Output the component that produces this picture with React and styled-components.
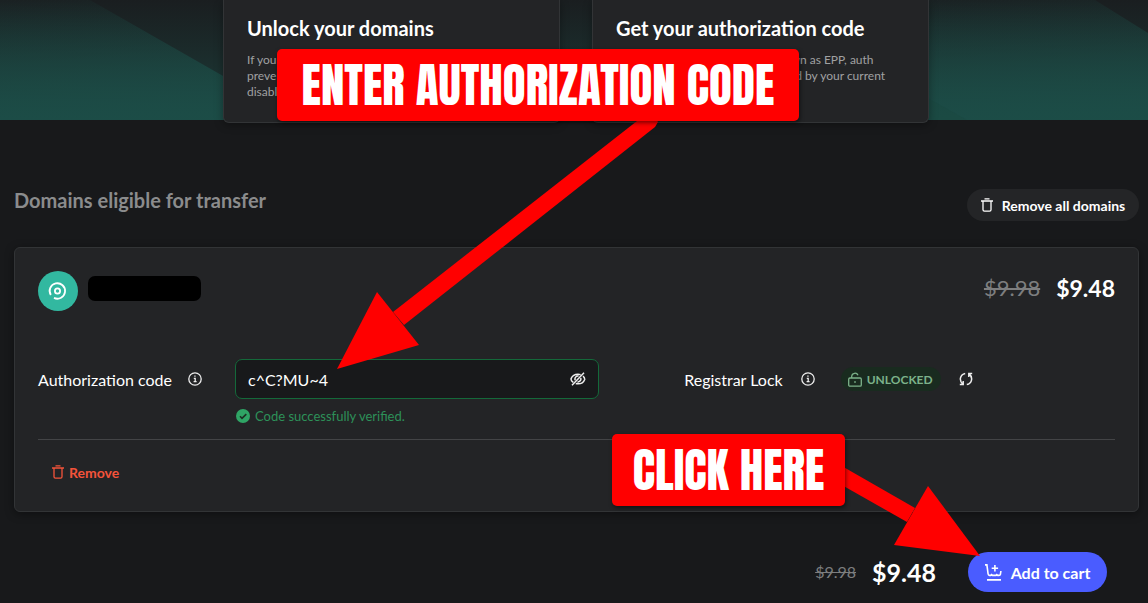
import React from 'react';
import styled, { createGlobalStyle } from 'styled-components';

const GlobalStyle = createGlobalStyle`
  *, *::before, *::after { box-sizing: border-box; }
  body {
    margin: 0;
    background: #18191b;
    color: #fff;
    font-family: Lato, "Liberation Sans", sans-serif;
  }
  button, input { font: inherit; color: inherit; }
  h2, h3, p { margin: 0; }
`;

const Page = styled.div`
  position: relative;
  overflow-x: hidden;
`;

const Hero = styled.header`
  position: relative;
  height: 120px;
  padding: 0 10px 0 14px;
  background: linear-gradient(#1a1e20, #1c3c39);
`;

const HeroArt = styled.svg`
  position: absolute;
  inset: 0;
  width: 100%;
  height: 100%;
`;

const Tips = styled.div`
  position: relative;
  display: grid;
  grid-template-columns: 1fr 1fr;
  gap: 32px;
  max-width: 706px;
  margin: 0 auto;
`;

const Tip = styled.article`
  padding: 16px 23px 22px;
  background: #232426;
  border: 1px solid #323436;
  border-top: 0;
  border-radius: 0 0 6px 6px;
  box-shadow: 0 2px 8px rgba(0, 0, 0, 0.35);
`;

const TipTitle = styled.h3`
  margin-bottom: 12px;
  font-size: 20px;
  line-height: 24px;
  font-weight: 700;
  white-space: nowrap;
`;

const TipText = styled.p`
  font-size: 12px;
  line-height: 16px;
  color: #a0a1a2;
  white-space: nowrap;
`;

const Main = styled.main`
  padding: 69px 9px 0 14px;
`;

const SectionHead = styled.div`
  display: flex;
  align-items: flex-start;
  justify-content: space-between;
  margin-bottom: 26px;
`;

const SectionTitle = styled.h2`
  font-size: 20px;
  line-height: 22px;
  font-weight: 700;
  color: #8b8c8d;
`;

const PillButton = styled.button`
  display: flex;
  align-items: center;
  justify-content: center;
  gap: 9px;
  width: ${p => (p.$primary ? 139 : 172)}px;
  height: ${p => (p.$primary ? 40 : 32)}px;
  padding: 0;
  border: 0;
  border-radius: 20px;
  background: ${p => (p.$primary ? '#4a5cff' : '#242527')};
  font-size: ${p => (p.$primary ? 16 : 14)}px;
  font-weight: 700;
  white-space: nowrap;
  cursor: pointer;
`;

const DomainCard = styled.section`
  padding: 23px;
  background: #232426;
  border: 1px solid #323436;
  border-radius: 6px;
  box-shadow: 0 2px 10px rgba(0, 0, 0, 0.4);
`;

const DomainHead = styled.div`
  display: flex;
  align-items: flex-start;
  gap: 10px;
  height: 40px;
`;

const Redacted = styled.div`
  width: 113px;
  height: 25px;
  margin-top: 5px;
  border-radius: 7px;
  background: #000;
`;

const Prices = styled.div`
  display: flex;
  align-items: center;
  gap: 16px;
  margin-left: auto;
  line-height: 34px;
`;

const OldPrice = styled.s`
  font-size: ${p => (p.$small ? 16 : 22)}px;
  color: #7d7e7f;
`;

const Price = styled.strong`
  font-size: ${p => (p.$large ? 25 : 23)}px;
  font-weight: 700;
`;

const Fields = styled.div`
  display: grid;
  grid-template-columns: 3fr 2fr;
  margin-top: 48px;
  padding-bottom: 15px;
  border-bottom: 1px solid #434446;
`;

const CodeField = styled.div`
  display: grid;
  grid-template-columns: 197px 1fr;
  padding-right: 85px;
`;

const LabelRow = styled.div`
  display: flex;
  align-items: center;
  gap: ${p => (p.$wide ? 18 : 16)}px;
  height: 40px;
  font-size: 16px;
  white-space: nowrap;
`;

const IconButton = styled.button`
  display: inline-flex;
  padding: 0;
  border: 0;
  background: none;
  cursor: pointer;
`;

const InputBox = styled.div`
  display: flex;
  align-items: center;
  height: 40px;
  padding: 0 12px;
  background: #18191b;
  border: 1px solid #14693a;
  border-radius: 7px;
`;

const CodeInput = styled.input`
  flex: 1;
  min-width: 0;
  padding: 0;
  border: 0;
  outline: 0;
  background: none;
  font-size: 16px;
`;

const Verified = styled.p`
  display: flex;
  align-items: center;
  gap: 5px;
  padding: 9px 0 0 1px;
  font-size: 13px;
  line-height: 16px;
  color: #2d9159;
`;

const Badge = styled.span`
  display: flex;
  align-items: center;
  gap: 5px;
  height: 24px;
  margin-left: 8px;
  padding: 0 8px 0 7px;
  border-radius: 12px;
  background: #192b1f;
  color: #7cb28a;
  font-size: 12px;
  font-weight: 700;
`;

const RemoveButton = styled.button`
  display: flex;
  align-items: center;
  gap: 5px;
  height: 32px;
  margin: 16px 0 0;
  padding: 0 14px;
  border: 0;
  background: none;
  color: #f4533a;
  font-size: 14px;
  font-weight: 700;
  cursor: pointer;
`;

const Summary = styled.footer`
  display: flex;
  align-items: center;
  gap: 32px;
  padding: 40px 32px 11px;
`;

const Callouts = styled.div`
  position: absolute;
  inset: 0;
  pointer-events: none;
`;

const Arrows = styled.svg`
  position: absolute;
  top: 0;
  left: 0;
`;

const Callout = styled.div`
  position: absolute;
  left: ${p => p.$x}px;
  top: ${p => p.$y}px;
  display: flex;
  align-items: center;
  justify-content: center;
  width: ${p => p.$w}px;
  height: 72px;
  border-radius: 5px;
  background: #f00;
  box-shadow: 1px 2px 4px rgba(0, 0, 0, 0.5);
  font-family: Anton, Impact, "Liberation Sans Narrow", sans-serif;
  font-size: 47px;
  font-weight: 400;
  white-space: nowrap;
`;

const Trash = () => (
  <svg width="12" height="14" viewBox="0 0 12 14" fill="none" stroke="currentColor" strokeWidth="1.3">
    <path d="M3.5 .8h5M0 3h12M2 3v8.8q0 1.4 1.4 1.4h5.2q1.4 0 1.4-1.4V3" />
  </svg>
);

const Info = () => (
  <svg width="14" height="14" viewBox="0 0 14 14" fill="none" stroke="#eee" strokeWidth="1.3">
    <circle cx="7" cy="7" r="6.2" />
    <path d="M5.8 6.4H7.2V9.6M5.6 9.7h3M6.3 4.2h1.3" />
  </svg>
);

const Avatar = () => (
  <svg width="40" height="40" viewBox="0 0 40 40" fill="none" stroke="#fff" strokeWidth="1.8">
    <circle cx="20" cy="20" r="20" fill="#32b8a0" stroke="none" />
    <circle cx="19.5" cy="20" r="2.6" />
    <path d="M12.8 24A7.7 7.7 0 1 1 16 26.9" />
  </svg>
);

const EyeOff = () => (
  <svg width="16" height="16" viewBox="0 0 16 16" fill="none" stroke="#eee" strokeWidth="1.5">
    <path d="M2 14.2 14 1.8M3.3 11.4C1.4 10 .8 8.4 1.2 7.4 2.3 4.7 5 3.2 8 3.2q1.500 0 2.600.4M13 5.100q1.800 1.500 1.700 3.300C13.600 11.300 11 12.800 8 12.800q-1.200 0-2.200-.3M5.200 9.200A3 3 0 0 1 8.600 5.100M10.700 6.900A3 3 0 0 1 7.400 10.900" />
  </svg>
);

const Check = () => (
  <svg width="14" height="14" viewBox="0 0 14 14">
    <circle cx="7" cy="7" r="7" fill="#2fa565" />
    <path d="m4 7.300 2 2 4.300-4.200" fill="none" stroke="#1d3024" strokeWidth="1.600" />
  </svg>
);

const Unlock = () => (
  <svg width="14" height="15" viewBox="0 0 14 15" fill="none" stroke="currentColor" strokeWidth="1.300">
    <rect x=".7" y="6" width="12.600" height="8.200" rx="1.200" />
    <path d="M3.700 6V4.200A3.300 3.300 0 0 1 10 3.200M6.200 10h1.600" />
  </svg>
);

const Refresh = () => (
  <svg width="14" height="14" viewBox="0 0 14 14" fill="none" stroke="#eee" strokeWidth="1.500">
    <path d="M6.200 1.400C1 2.400-.4 8.600 4 12.400M.8 12.600h3.400V9M7.800 12.600C13 11.600 14.400 5.400 10 1.600M13.200 1.400H9.800V5" />
  </svg>
);

const Cart = () => (
  <svg width="17" height="17" viewBox="0 0 17 17" fill="none" stroke="#fff" strokeWidth="1.600">
    <path d="M0 .9h1.900L3.100 10q.2 1.400 1.300 1.400h1.400l.8-.8.900.8h3.500l.8-.8.900.8h1.300q1.200 0 1.400-1.100l.5-3.300M9.900 1v6.400M6.700 4.200h6.400M2 15.900h14" />
  </svg>
);

export default function App() {
  return (
    <Page>
      <GlobalStyle />
      <Hero>
        <HeroArt viewBox="0 0 1148 120" preserveAspectRatio="none">
          <defs>
            <linearGradient id="glow" x1="0.1" y1="0" x2="0.2" y2="1">
              <stop offset="0" stopColor="#1c5a52" stopOpacity="0.05" />
              <stop offset="1" stopColor="#1c4e48" stopOpacity="0.9" />
            </linearGradient>
          </defs>
          <path d="M0 0H90L300 120H0z" fill="url(#glow)" />
          <path d="M870 0H1095L1148 33V120H870z" fill="url(#glow)" />
          <path d="M870 66 967 120H870z" fill="#19483f" opacity="0.5" />
        </HeroArt>
        <Tips>
          <Tip>
            <TipTitle>Unlock your domains</TipTitle>
            <TipText>
              If your domain is locked, unlock it to<br />
              prevent any delays. You may also<br />
              disable domain privacy.
            </TipText>
          </Tip>
          <Tip>
            <TipTitle>Get your authorization code</TipTitle>
            <TipText>
              Your authorization code, also known as EPP, auth<br />
              or transfer code, is usually provided by your current<br />
              domain registrar.
            </TipText>
          </Tip>
        </Tips>
      </Hero>
      <Main>
        <SectionHead>
          <SectionTitle>Domains eligible for transfer</SectionTitle>
          <PillButton type="button"><Trash />Remove all domains</PillButton>
        </SectionHead>
        <DomainCard>
          <DomainHead>
            <Avatar />
            <Redacted />
            <Prices>
              <OldPrice>$9.98</OldPrice>
              <Price>$9.48</Price>
            </Prices>
          </DomainHead>
          <Fields>
            <CodeField>
              <LabelRow>
                <label htmlFor="code">Authorization code</label>
                <IconButton type="button" aria-label="About authorization codes"><Info /></IconButton>
              </LabelRow>
              <div>
                <InputBox>
                  <CodeInput id="code" defaultValue="c^C?MU~4" />
                  <IconButton type="button" aria-label="Hide code"><EyeOff /></IconButton>
                </InputBox>
                <Verified><Check />Code successfully verified.</Verified>
              </div>
            </CodeField>
            <LabelRow $wide>
              <span>Registrar Lock</span>
              <IconButton type="button" aria-label="About registrar lock"><Info /></IconButton>
              <Badge><Unlock />UNLOCKED</Badge>
              <IconButton type="button" aria-label="Refresh lock status"><Refresh /></IconButton>
            </LabelRow>
          </Fields>
          <RemoveButton type="button"><Trash />Remove</RemoveButton>
        </DomainCard>
        <Summary>
          <Prices>
            <OldPrice $small>$9.98</OldPrice>
            <Price $large>$9.48</Price>
          </Prices>
          <PillButton type="button" $primary><Cart />Add to cart</PillButton>
        </Summary>
      </Main>
      <Callouts>
        <Arrows width="1148" height="603" viewBox="0 0 1148 603" fill="#f00">
          <path d="M393 312 637 121 652 112 658 122 655 127 404 325z" />
          <path d="M337 369 377 292 419 345z" />
          <path d="M840 465 915 508 907 522 840 484z" />
          <path d="M980 556 928 486 894 545z" />
        </Arrows>
        <Callout $x={277} $y={49} $w={522}>ENTER AUTHORIZATION CODE</Callout>
        <Callout $x={612} $y={434} $w={233}>CLICK HERE</Callout>
      </Callouts>
    </Page>
  );
}
